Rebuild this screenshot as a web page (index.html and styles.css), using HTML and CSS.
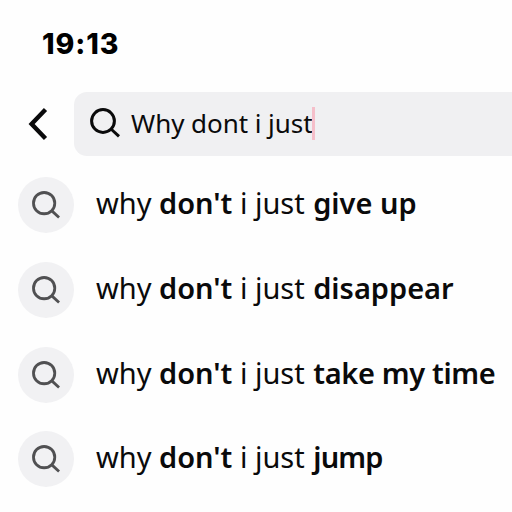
FILE: index.html
```html
<!DOCTYPE html>
<html lang="en">
<head>
    <meta charset="UTF-8">
    <meta name="viewport" content="width=device-width, initial-scale=1.0">
    <title>Search</title>
    <link rel="stylesheet" href="styles.css">
</head>
<body>
    <svg class="sprite" width="0" height="0">
        <symbol id="search" viewBox="0 0 30 30">
            <circle cx="13" cy="13" r="11.4"/>
            <path d="M21 21l8 7.4"/>
        </symbol>
    </svg>

    <div class="status-bar">19:13</div>

    <header class="search-bar">
        <svg class="back-icon" width="20" height="34" viewBox="0 0 20 34">
            <path d="M17.5 2.5L3.6 17l13.9 14.5"/>
        </svg>
        <div class="search-box">
            <svg class="search-icon"><use href="#search"/></svg>
            <span class="query">Why dont i just</span>
            <span class="caret"></span>
        </div>
    </header>

    <ul class="suggestions">
        <li>
            <span class="bubble"><svg class="search-icon"><use href="#search"/></svg></span>
            <span class="text">why <b>don't</b> i just <b class="completion">give up</b></span>
        </li>
        <li>
            <span class="bubble"><svg class="search-icon"><use href="#search"/></svg></span>
            <span class="text">why <b>don't</b> i just <b class="completion">disappear</b></span>
        </li>
        <li>
            <span class="bubble"><svg class="search-icon"><use href="#search"/></svg></span>
            <span class="text">why <b>don't</b> i just <b class="completion tight">take my time</b></span>
        </li>
        <li>
            <span class="bubble"><svg class="search-icon"><use href="#search"/></svg></span>
            <span class="text">why <b>don't</b> i just <b class="completion tighter">jump</b></span>
        </li>
    </ul>
</body>
</html>
```
FILE: styles.css
```css
* {
    box-sizing: border-box;
}

body {
    margin: 0;
    height: 512px;
    overflow: hidden;
    background-color: #fefefe;
    color: #0a0a0b;
    font-family: 'Noto Sans', sans-serif;
}

.sprite {
    display: block;
}

.status-bar {
    height: 92px;
    padding: 26px 0 0 42px;
    font-family: 'Inter', sans-serif;
    font-size: 28.5px;
    font-weight: 800;
    letter-spacing: 0.9px;
    line-height: 36px;
    color: #000;
}

.search-bar {
    display: flex;
    align-items: center;
    height: 64px;
    padding-left: 28px;
}

.back-icon,
.search-icon {
    flex: none;
    fill: none;
    stroke: #0a0a0b;
}

.back-icon {
    stroke-width: 4.4;
}

.search-icon {
    width: 30px;
    height: 30px;
    stroke-width: 3;
}

.search-box {
    flex: 1;
    display: flex;
    align-items: center;
    height: 64px;
    margin-left: 26px;
    padding-left: 16px;
    border-radius: 13px 0 0 13px;
    background-color: #f0f0f2;
}

.search-box .search-icon {
    position: relative;
    top: -1px;
}

.query {
    margin-left: 11px;
    padding-bottom: 2px;
    font-size: 26px;
    line-height: 36px;
    letter-spacing: -0.05px;
    white-space: nowrap;
}

.caret {
    width: 3px;
    height: 33px;
    margin: 0 0 2px -1px;
    background-color: #f5bfca;
}

.suggestions {
    list-style: none;
    margin: 0;
    padding: 7px 0 0 18px;
}

.suggestions li {
    display: flex;
    align-items: center;
    height: 84.7px;
}

.bubble {
    flex: none;
    display: flex;
    align-items: center;
    justify-content: center;
    width: 56px;
    height: 56px;
    border-radius: 50%;
    background-color: #f1f1f3;
}

.bubble .search-icon {
    width: 28px;
    height: 28px;
    stroke: #505052;
}

.text {
    margin-left: 22px;
    padding-bottom: 4px;
    font-size: 29px;
    line-height: 40px;
    white-space: nowrap;
}

.text b {
    font-weight: 600;
}

.text .completion {
    margin-left: 1px;
}

.text .tight {
    letter-spacing: -0.35px;
}

.text .tighter {
    letter-spacing: -0.8px;
}
```
